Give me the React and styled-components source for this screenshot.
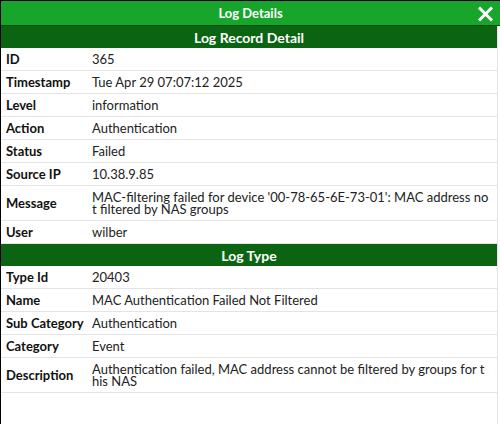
import React from 'react';
import styled, { createGlobalStyle } from 'styled-components';

const GlobalStyle = createGlobalStyle`
  html, body {
    margin: 0;
    padding: 0;
    background: #fff;
  }
  body {
    font-family: Lato, "Open Sans", "Liberation Sans", sans-serif;
  }
`;

const Modal = styled.div`
  width: 500px;
  height: 424px;
  box-sizing: border-box;
  border-left: 1px solid #000;
  border-top: 1px solid #000;
  background: #fff;
  overflow: hidden;
`;

const TitleBar = styled.div`
  position: relative;
  height: 24px;
  background: #17a62b;
  border-bottom: 1px solid #0a4a0e;
  display: flex;
  align-items: center;
  justify-content: center;
  color: #fff;
  font-weight: 700;
  font-size: 13px;
`;

const CloseButton = styled.button`
  position: absolute;
  right: 6px;
  top: 5px;
  width: 17px;
  height: 16px;
  padding: 0;
  border: none;
  background: none;
  cursor: pointer;
  display: flex;
`;

const Content = styled.div`
  width: 497px;
  border-right: 1px solid #e4e4e4;
  box-sizing: border-box;
  min-height: 399px;
`;

const SectionHeader = styled.div`
  height: 22px;
  background: #0b6411;
  color: #fff;
  font-weight: 700;
  font-size: 14px;
  display: flex;
  align-items: center;
  justify-content: center;
`;

const Row = styled.div`
  display: grid;
  grid-template-columns: 86px 1fr;
  border-bottom: 1px solid #e4e4e4;
  font-size: 13px;
  line-height: 12px;
  color: #222;
`;

const Label = styled.div`
  padding: 5px 5px;
  font-weight: 700;
  color: #111;
  white-space: nowrap;
  display: flex;
  align-items: center;
`;

const Value = styled.div`
  padding: 5px 7px 5px 5px;
  word-break: break-all;
  display: flex;
  align-items: center;
`;

const recordRows = [
  ['ID', '365'],
  ['Timestamp', 'Tue Apr 29 07:07:12 2025'],
  ['Level', 'information'],
  ['Action', 'Authentication'],
  ['Status', 'Failed'],
  ['Source IP', '10.38.9.85'],
  ['Message', "MAC-filtering failed for device '00-78-65-6E-73-01': MAC address not filtered by NAS groups"],
  ['User', 'wilber'],
];

const typeRows = [
  ['Type Id', '20403'],
  ['Name', 'MAC Authentication Failed Not Filtered'],
  ['Sub Category', 'Authentication'],
  ['Category', 'Event'],
  ['Description', 'Authentication failed, MAC address cannot be filtered by groups for this NAS'],
];

const DetailRows = ({ rows }) =>
  rows.map(([label, value]) => (
    <Row key={label}>
      <Label>{label}</Label>
      <Value>{value}</Value>
    </Row>
  ));

const App = () => {
  return (
    <>
      <GlobalStyle />
      <Modal>
        <TitleBar>
          Log Details
          <CloseButton aria-label="Close">
            <svg width="17" height="16" viewBox="0 0 17 16">
              <path d="M2 1.5 L15 14.5 M15 1.5 L2 14.5" stroke="#fff" strokeWidth="3" strokeLinecap="butt" />
            </svg>
          </CloseButton>
        </TitleBar>
        <Content>
          <SectionHeader>Log Record Detail</SectionHeader>
          <DetailRows rows={recordRows} />
          <SectionHeader>Log Type</SectionHeader>
          <DetailRows rows={typeRows} />
        </Content>
      </Modal>
    </>
  );
};

export default App;
